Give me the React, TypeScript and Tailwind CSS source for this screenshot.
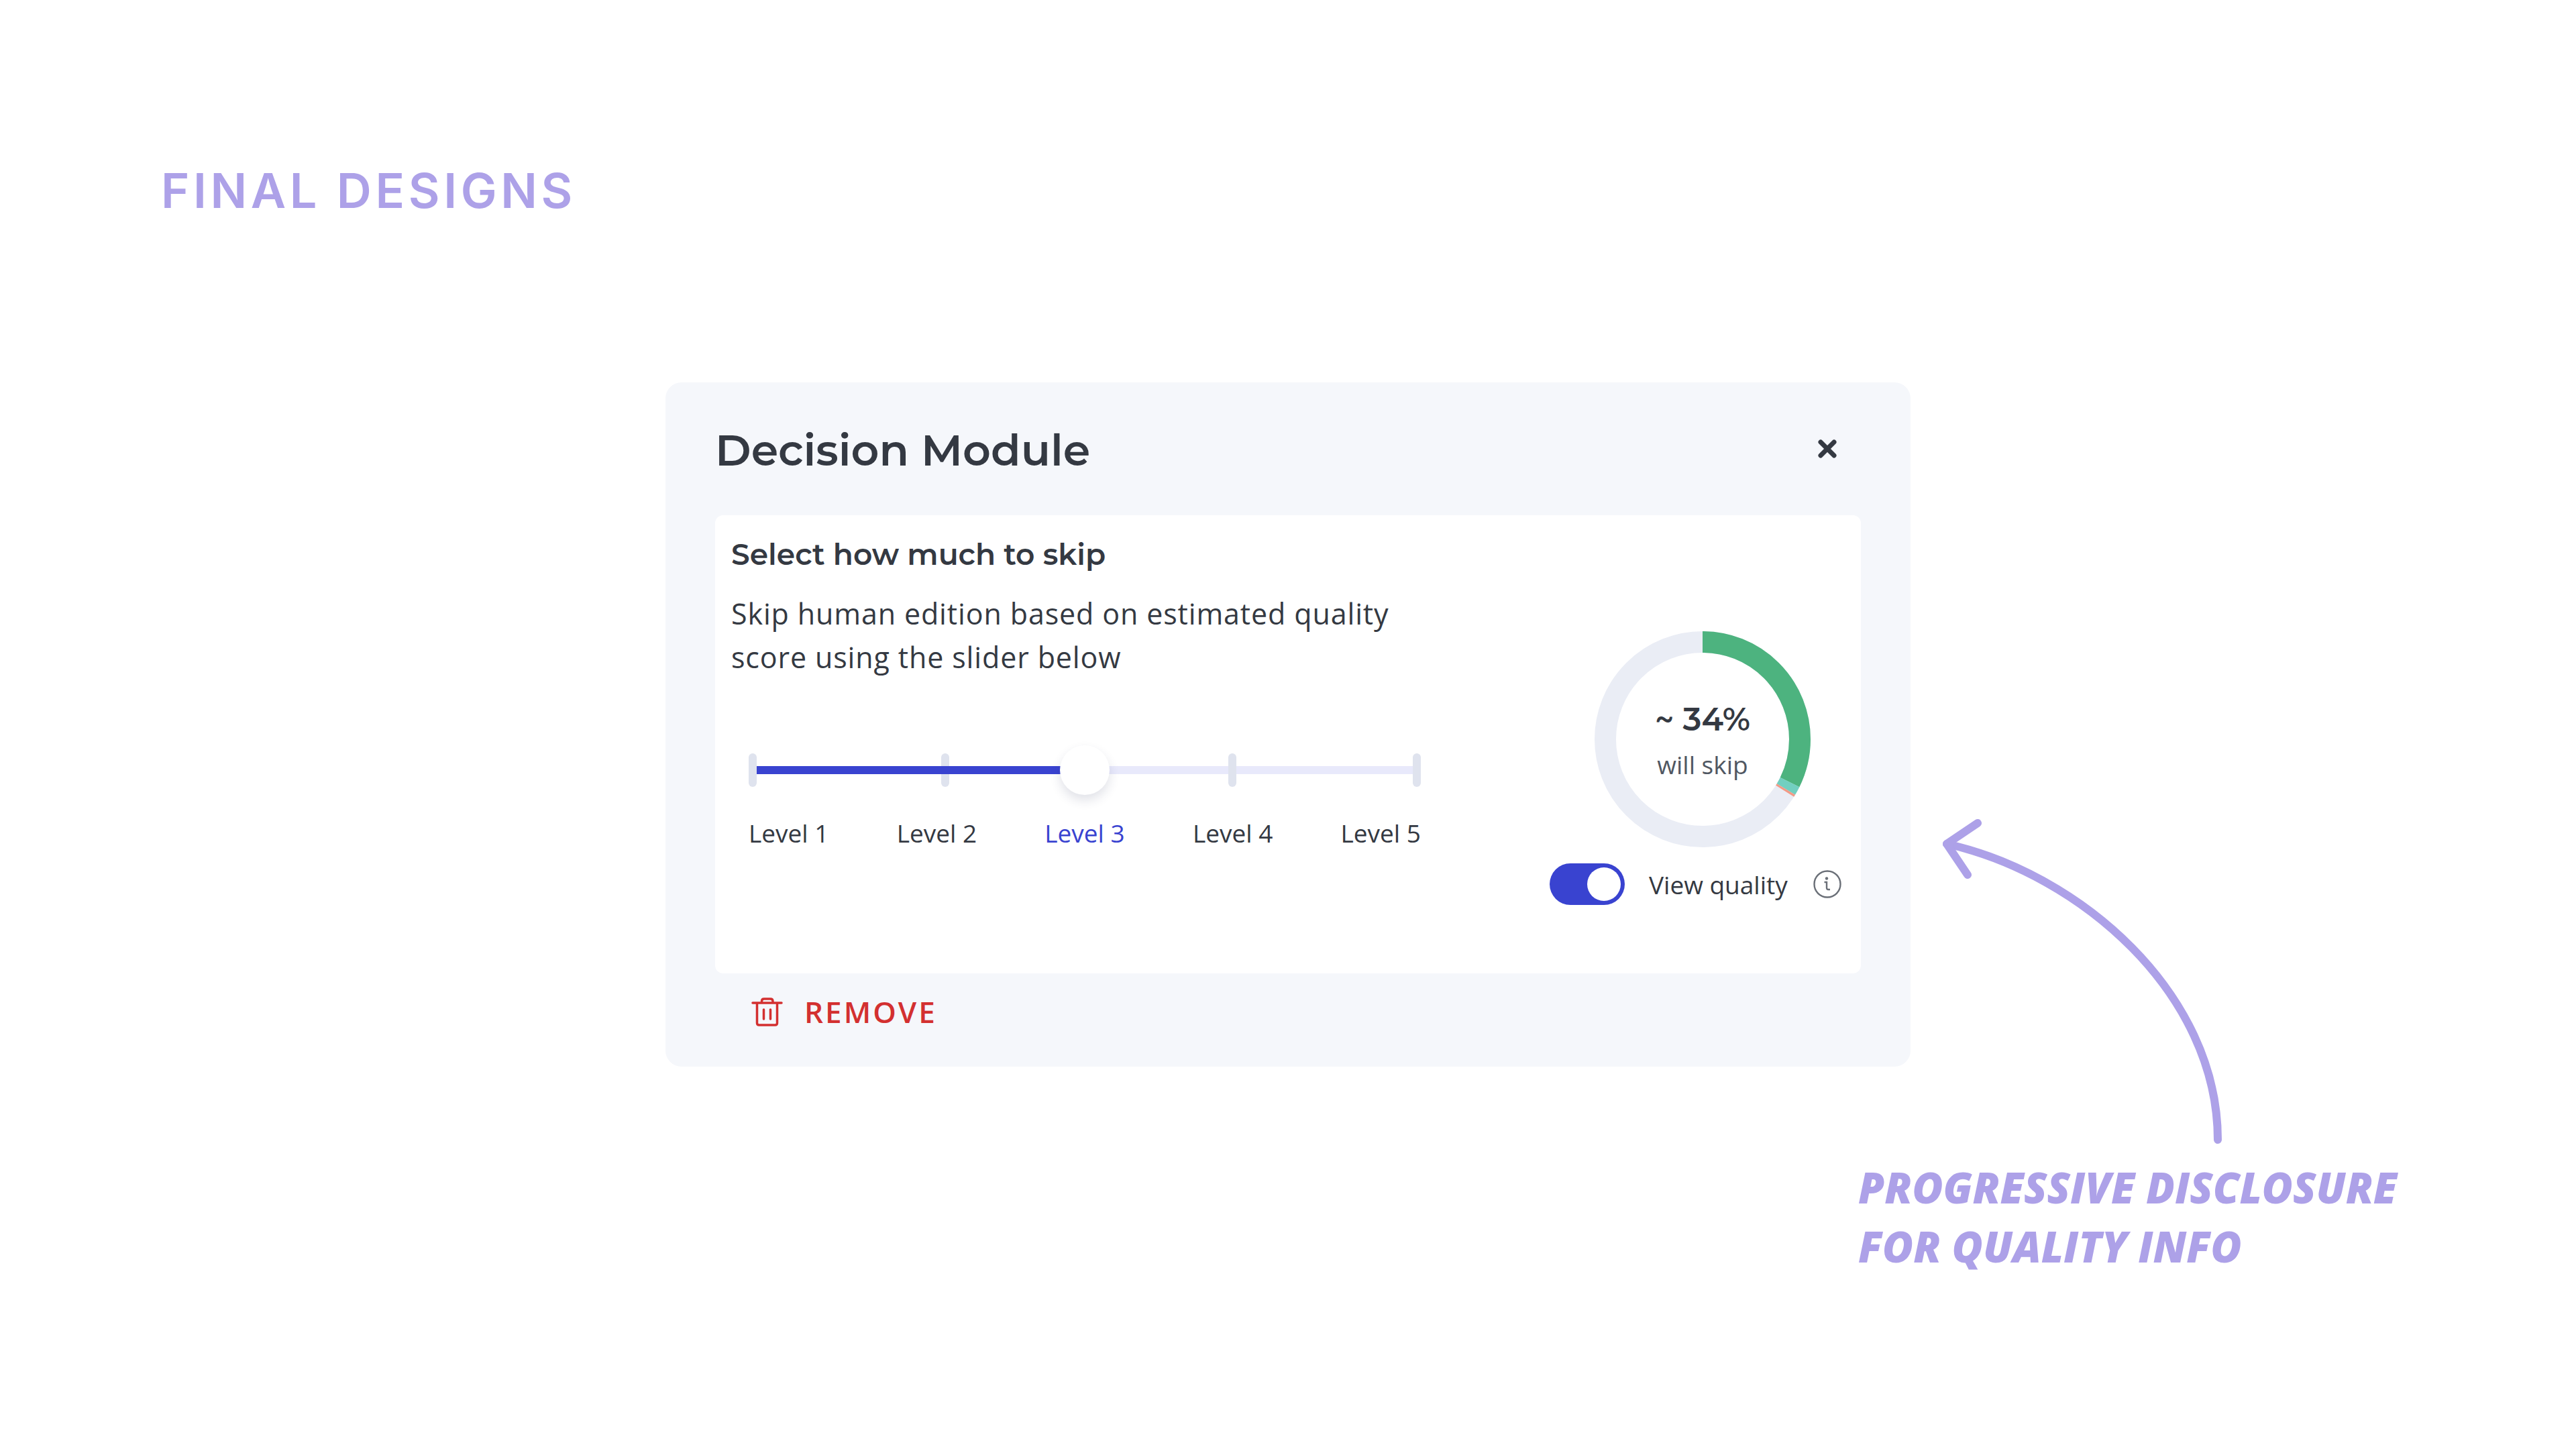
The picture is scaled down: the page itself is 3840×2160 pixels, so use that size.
import { useState } from 'react';

const LEVELS = [1, 2, 3, 4, 5];

// Share of the ring taken by each quality band, in percent
const BANDS = [
  { name: 'high',   color: '#4db37f', from: 0,    size: 32.3 },
  { name: 'medium', color: '#72cfc0', from: 32.3, size: 1.3 },
  { name: 'low',    color: '#f29a86', from: 33.6, size: 0.35 },
];

function SkipRing({ showBands }: { showBands: boolean }) {
  return (
    <div className="relative w-[322px] h-[322px]">
      <svg viewBox="0 0 322 322" className="w-full h-full -rotate-90" fill="none" strokeWidth="32">
        <circle cx="161" cy="161" r="145" stroke="#eaedf5" />
        {showBands && BANDS.map(b => (
          <circle key={b.name} cx="161" cy="161" r="145" stroke={b.color} pathLength="100"
            strokeDasharray={`${b.size} ${100 - b.size}`} strokeDashoffset={-b.from} />
        ))}
      </svg>
      <div className="absolute inset-0 flex flex-col items-center justify-center pt-1">
        <span className="font-['Montserrat','Inter',sans-serif] text-[48px] leading-[72px] font-semibold text-[#343942]">~ 34%</span>
        <span className="text-[37px] leading-[64px] text-[#505762]">will skip</span>
      </div>
    </div>
  );
}

function LevelSlider() {
  const [level, setLevel] = useState(3);

  return (
    <div className="w-[1002px] max-w-full">
      <div className="relative h-[74px]">
        <div className="absolute inset-x-3 top-[31px] h-3 bg-[#e8e9fb]" />
        <div className="absolute inset-0 flex items-center">
          <span className="w-3 h-[50px] rounded-full bg-[#dfe3ee]" />
          <span className="flex-[275]" />
          <span className="w-3 h-[50px] rounded-full bg-[#dfe3ee]" />
          <span className="flex-[415]" />
          <span className="w-3 h-[50px] rounded-full bg-[#dfe3ee]" />
          <span className="flex-[263]" />
          <span className="w-3 h-[50px] rounded-full bg-[#dfe3ee]" />
        </div>
        <div className="absolute inset-x-3 top-[31px] h-3">
          <div className="h-full bg-[#3943d0]" style={{ width: `${(level - 1) * 25}%` }} />
        </div>
        <input
          type="range" min={1} max={5} value={level} aria-label="Skip level"
          onChange={e => setLevel(Number(e.target.value))}
          className="absolute inset-0 w-full h-full appearance-none bg-transparent cursor-pointer [&::-webkit-slider-thumb]:appearance-none [&::-webkit-slider-thumb]:w-[74px] [&::-webkit-slider-thumb]:h-[74px] [&::-webkit-slider-thumb]:rounded-full [&::-webkit-slider-thumb]:bg-white [&::-webkit-slider-thumb]:shadow-[0_8px_16px_rgba(40,50,90,0.14)]"
        />
      </div>
      <div className="flex justify-between mt-8">
        {LEVELS.map(n => (
          <button key={n} onClick={() => setLevel(n)}
            className={`text-[37px] leading-[50px] ${n === level ? 'text-[#3943d0]' : 'text-[#343942]'}`}>
            Level {n}
          </button>
        ))}
      </div>
    </div>
  );
}

function DecisionModule() {
  const [viewQuality, setViewQuality] = useState(true);

  return (
    <section className="bg-[#f5f7fb] rounded-3xl px-[74px] font-['Open_Sans',sans-serif] text-[#343942]">

      {/* Header */}
      <header className="flex items-center justify-between h-[198px] pr-9">
        <h2 className="pt-1 font-['Montserrat','Inter',sans-serif] text-[65px] leading-[80px] font-semibold">Decision Module</h2>
        <button aria-label="Close">
          <svg width="28" height="28" viewBox="0 0 28 28" fill="none" stroke="currentColor" strokeWidth="7" strokeLinecap="round">
            <path d="M4 4l20 20M24 4L4 24" />
          </svg>
        </button>
      </header>

      {/* Body */}
      <div className="flex justify-between bg-white rounded-xl pl-6 pr-2 pb-[101px]">
        <div className="pt-7">
          <h3 className="font-['Montserrat','Inter',sans-serif] text-[44px] leading-[60px] font-semibold">Select how much to skip</h3>
          <p className="mt-[26px] max-w-[1030px] text-[43px] leading-[65px] tracking-[0.02em]">
            Skip human edition based on estimated quality score using the slider below
          </p>
          <div className="mt-[99px] ml-[26px]">
            <LevelSlider />
          </div>
        </div>

        <div className="flex flex-col items-center w-[456px] pt-[173px]">
          <SkipRing showBands={viewQuality} />
          <div className="flex items-center w-full mt-[23px] gap-[38px]">
            <label className="flex items-center gap-9 cursor-pointer text-[37px] leading-[62px] whitespace-nowrap">
              <input type="checkbox" role="switch" checked={viewQuality} onChange={e => setViewQuality(e.target.checked)} className="peer sr-only" />
              <span className="flex items-center w-28 h-[62px] p-1.5 rounded-full bg-[#c5cad8] peer-checked:bg-[#3943d0] peer-checked:justify-end">
                <span className="w-[50px] h-[50px] rounded-full bg-white" />
              </span>
              <span className="pt-0.5">View quality</span>
            </label>
            <button aria-label="About quality">
              <svg width="42" height="42" viewBox="0 0 42 42" fill="none" stroke="#6a6f77" strokeWidth="2.4">
                <circle cx="21" cy="21" r="19.500" />
                <circle cx="20" cy="12.500" r="2.2" fill="#6a6f77" stroke="none" />
                <path d="M16.500 18h3.500v8.500q0 2.500 2.500 2.500h2.500" />
              </svg>
            </button>
          </div>
        </div>
      </div>

      {/* Footer */}
      <footer className="h-[139px] pt-[26px] pl-[54px]">
        <button className="flex items-center gap-8 text-[#d33030] text-[44px] leading-[62px] font-semibold tracking-[3px]">
          <svg width="47" height="43" viewBox="0 0 47 43" fill="none" stroke="currentColor" strokeWidth="3.5" strokeLinecap="round" strokeLinejoin="round">
            <path d="M2 8h43M8.500 8v30q0 3 3 3h24q3 0 3-3V8M15.500 8V5.500q0-3.500 3.500-3.500h9.500q3.500 0 3.500 3.500V8" />
            <path d="M18.500 18v14M28.500 18v14" />
          </svg>
          REMOVE
        </button>
      </footer>
    </section>
  );
}

export default function App() {
  return (
    <main className="min-h-screen bg-white text-[#ada1e8]">
      <h1 className="pt-60 pl-60 font-['Inter',sans-serif] text-[72px] leading-[88px] font-semibold tracking-[0.078em]">FINAL DESIGNS</h1>

      <div className="grid grid-cols-[1fr_minmax(0,1856px)_1fr] items-start mt-[242px]">
        <div />
        <DecisionModule />

        {/* Handwritten note */}
        <div className="pt-[650px]">
          <svg width="420" height="486" viewBox="0 0 420 486" fill="none" stroke="currentColor" strokeWidth="12" strokeLinecap="round" strokeLinejoin="round" className="ml-12">
            <path d="M6 38C204 82 410 260 410 479" />
            <path d="M52 7L6 38l31 46" />
          </svg>
          <p className="-ml-[78px] mt-5 font-['Permanent_Marker','Open_Sans',sans-serif] text-[63px] leading-[88px] font-extrabold italic whitespace-nowrap">
            PROGRESSIVE DISCLOSURE<br />FOR QUALITY INFO
          </p>
        </div>
      </div>
    </main>
  );
}
